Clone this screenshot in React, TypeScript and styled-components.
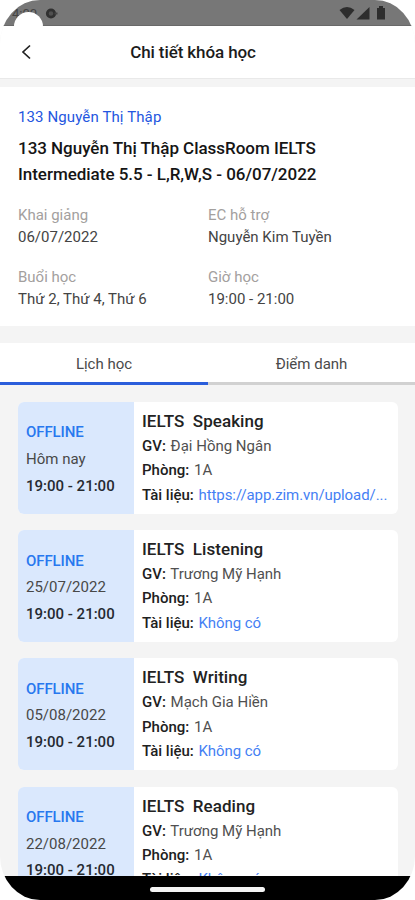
import React from "react";
import styled, { createGlobalStyle } from "styled-components";

const GlobalStyle = createGlobalStyle`
  * { box-sizing: border-box; }
  body { margin: 0; background: #fff; }
`;

const Phone = styled.div`
  width: 415px;
  height: 900px;
  display: flex;
  flex-direction: column;
  overflow: hidden;
  position: relative;
  border-radius: 40px / 44px;
  background: #f4f4f4;
  font-family: Roboto, "Noto Sans", sans-serif;
  font-size: 15px;
  letter-spacing: 0;
  color: #484848;
`;

const StatusBar = styled.div`
  flex: none;
  height: 26px;
  display: flex;
  align-items: flex-start;
  justify-content: space-between;
  padding: 6px 28px 0 12px;
  background: #777;
  border-bottom: 1px solid #696969;
  color: #2d2d2d;
`;

const StatusGroup = styled.div`
  display: flex;
  align-items: center;
  gap: 7px;
  height: 14px;
`;

const Clock = styled.span`
  font-size: 13px;
  width: 26px;
  letter-spacing: 0;
  color: #444;
`;

const Bubble = styled.div`
  position: absolute;
  left: 14px;
  top: 12px;
  width: 29px;
  height: 29px;
  border-radius: 50%;
  background: #fff;
`;

const Header = styled.header`
  flex: none;
  height: 53px;
  display: grid;
  grid-template-columns: 52px 1fr 52px;
  align-items: center;
  background: #fff;
  border-bottom: 1px solid #e9e9e9;
`;

const BackButton = styled.button`
  border: 0;
  padding: 0 0 0 19px;
  background: none;
  display: flex;
  color: #222;
`;

const Title = styled.h1`
  margin: 0 0 1px -29px;
  text-align: center;
  font-size: 17px;
  line-height: 24px;
  font-weight: 500;
  letter-spacing: -0.1px;
  color: #1c1c1c;
`;

const Info = styled.section`
  flex: none;
  margin-top: 8px;
  height: 239px;
  padding: 18px 18px 0;
  background: #fff;
`;

const Place = styled.div`
  font-size: 15px;
  line-height: 24px;
  letter-spacing: 0.12px;
  color: #2456e0;
`;

const CourseName = styled.h2`
  margin: 7px 0 0;
  font-size: 17px;
  line-height: 25.5px;
  font-weight: 500;
  letter-spacing: -0.03px;
  white-space: nowrap;
  color: #151515;
`;

const Details = styled.dl`
  margin: 17px 0 0;
  display: grid;
  grid-template-columns: 190px 1fr;
  row-gap: 17px;
`;

const Label = styled.dt`
  line-height: 22px;
  color: #a3a09e;
`;

const Value = styled.dd`
  margin: 0;
  line-height: 22.5px;
  color: #444;
`;

const Tabs = styled.nav`
  flex: none;
  margin-top: 17px;
  height: 42px;
  display: grid;
  grid-template-columns: 208px 1fr;
  background: #fff;
`;

const Tab = styled.button<{ $active?: boolean }>`
  border: 0;
  border-bottom: 3px solid ${(p) => (p.$active ? "#2b5edb" : "#d1d1d1")};
  padding: 2px 0 0;
  background: none;
  font: inherit;
  color: #4a4a4a;
`;

const Schedule = styled.main`
  flex: 1;
  min-height: 0;
  overflow: hidden;
  padding: 17px 17px 0 18px;
  display: flex;
  flex-direction: column;
  gap: 16.5px;
`;

const Card = styled.article`
  flex: none;
  height: 111.7px;
  display: grid;
  grid-template-columns: 116px 1fr;
  border-radius: 6px;
  overflow: hidden;
  background: #fff;
`;

const When = styled.div`
  display: flex;
  flex-direction: column;
  justify-content: center;
  padding: 3px 0 0 8px;
  background: #dae8fd;
  line-height: 26.6px;
`;

const Mode = styled.strong`
  font-weight: 500;
  letter-spacing: -0.1px;
  color: #2878ef;
`;

const Time = styled.span`
  font-weight: 500;
  color: #252a31;
`;

const Lesson = styled.div`
  min-width: 0;
  padding: 7px 10px 0 8px;
`;

const Subject = styled.h3`
  margin: 0;
  font-size: 17px;
  line-height: 25px;
  font-weight: 500;
  letter-spacing: 0.05px;
  white-space: pre;
  color: #222;
`;

const Line = styled.p`
  margin: 0;
  line-height: 24.3px;
  color: #505050;
  white-space: nowrap;
`;

const Key = styled.span`
  margin-right: 1px;
  font-weight: 500;
  letter-spacing: 0;
  color: #202020;
`;

const Material = styled.span`
  letter-spacing: -0.08px;
  color: #457ff4;
`;

const NavBar = styled.footer`
  flex: none;
  height: 24px;
  background: #000;
  display: flex;
  justify-content: center;
  padding: 11px 0 0;
`;

const NavHandle = styled.div`
  width: 115px;
  height: 5px;
  border-radius: 3px;
  background: #f4f4f4;
`;

const details = [
  ["Khai giảng", "06/07/2022", "EC hỗ trợ", "Nguyễn Kim Tuyền"],
  ["Buổi học", "Thứ 2, Thứ 4, Thứ 6", "Giờ học", "19:00 - 21:00"],
];

const lessons = [
  { date: "Hôm nay", skill: "Speaking", teacher: "Đại Hồng Ngân", material: "https://app.zim.vn/upload/..." },
  { date: "25/07/2022", skill: "Listening", teacher: "Trương Mỹ Hạnh", material: "Không có" },
  { date: "05/08/2022", skill: "Writing", teacher: "Mạch Gia Hiền", material: "Không có" },
  { date: "22/08/2022", skill: "Reading", teacher: "Trương Mỹ Hạnh", material: "Không có" },
];

const Gear = () => (
  <svg width="13" height="13" viewBox="0 0 13 13">
    <circle cx="6" cy="6.5" r="3.700" fill="#505050" stroke="#303030" strokeWidth="2.800" />
    <path d="M9.500 6.500h3" stroke="#444" strokeWidth="2" />
  </svg>
);

const SystemIcons = () => (
  <svg width="48" height="14" viewBox="0 0 48 14" fill="#2d2d2d">
    <path d="M0.500 4Q8 -2 15.500 4L8 13Z" />
    <path d="M17.500 13.500L30.500 1V13.500Z" />
    <path d="M38 2H40V0H44V2H46V13.500H38Z" />
  </svg>
);

export default function App() {
  return (
    <>
      <GlobalStyle />
      <Phone>
        <StatusBar>
          <StatusGroup>
            <Clock>4:00</Clock>
            <Gear />
          </StatusGroup>
          <StatusGroup>
            <SystemIcons />
          </StatusGroup>
        </StatusBar>
        <Bubble />
        <Header>
          <BackButton aria-label="Quay lại">
            <svg width="13" height="16" viewBox="0 0 13 16" fill="none" stroke="currentColor" strokeWidth="1.700">
              <path d="M11 1.500L4 8L11 14.500" />
            </svg>
          </BackButton>
          <Title>Chi tiết khóa học</Title>
        </Header>
        <Info>
          <Place>133 Nguyễn Thị Thập</Place>
          <CourseName>
            133 Nguyễn Thị Thập ClassRoom IELTS
            <br />
            Intermediate 5.5 - L,R,W,S - 06/07/2022
          </CourseName>
          <Details>
            {details.flatMap(([a, b, c, d]) => [
              <div key={a}>
                <Label>{a}</Label>
                <Value>{b}</Value>
              </div>,
              <div key={c}>
                <Label>{c}</Label>
                <Value>{d}</Value>
              </div>,
            ])}
          </Details>
        </Info>
        <Tabs>
          <Tab $active>Lịch học</Tab>
          <Tab>Điểm danh</Tab>
        </Tabs>
        <Schedule>
          {lessons.map((l) => (
            <Card key={l.date}>
              <When>
                <Mode>OFFLINE</Mode>
                <span>{l.date}</span>
                <Time>19:00 - 21:00</Time>
              </When>
              <Lesson>
                <Subject>{"IELTS  " + l.skill}</Subject>
                <Line>
                  <Key>GV:</Key> {l.teacher}
                </Line>
                <Line>
                  <Key>Phòng:</Key> 1A
                </Line>
                <Line>
                  <Key>Tài liệu:</Key> <Material>{l.material}</Material>
                </Line>
              </Lesson>
            </Card>
          ))}
        </Schedule>
        <NavBar>
          <NavHandle />
        </NavBar>
      </Phone>
    </>
  );
}
